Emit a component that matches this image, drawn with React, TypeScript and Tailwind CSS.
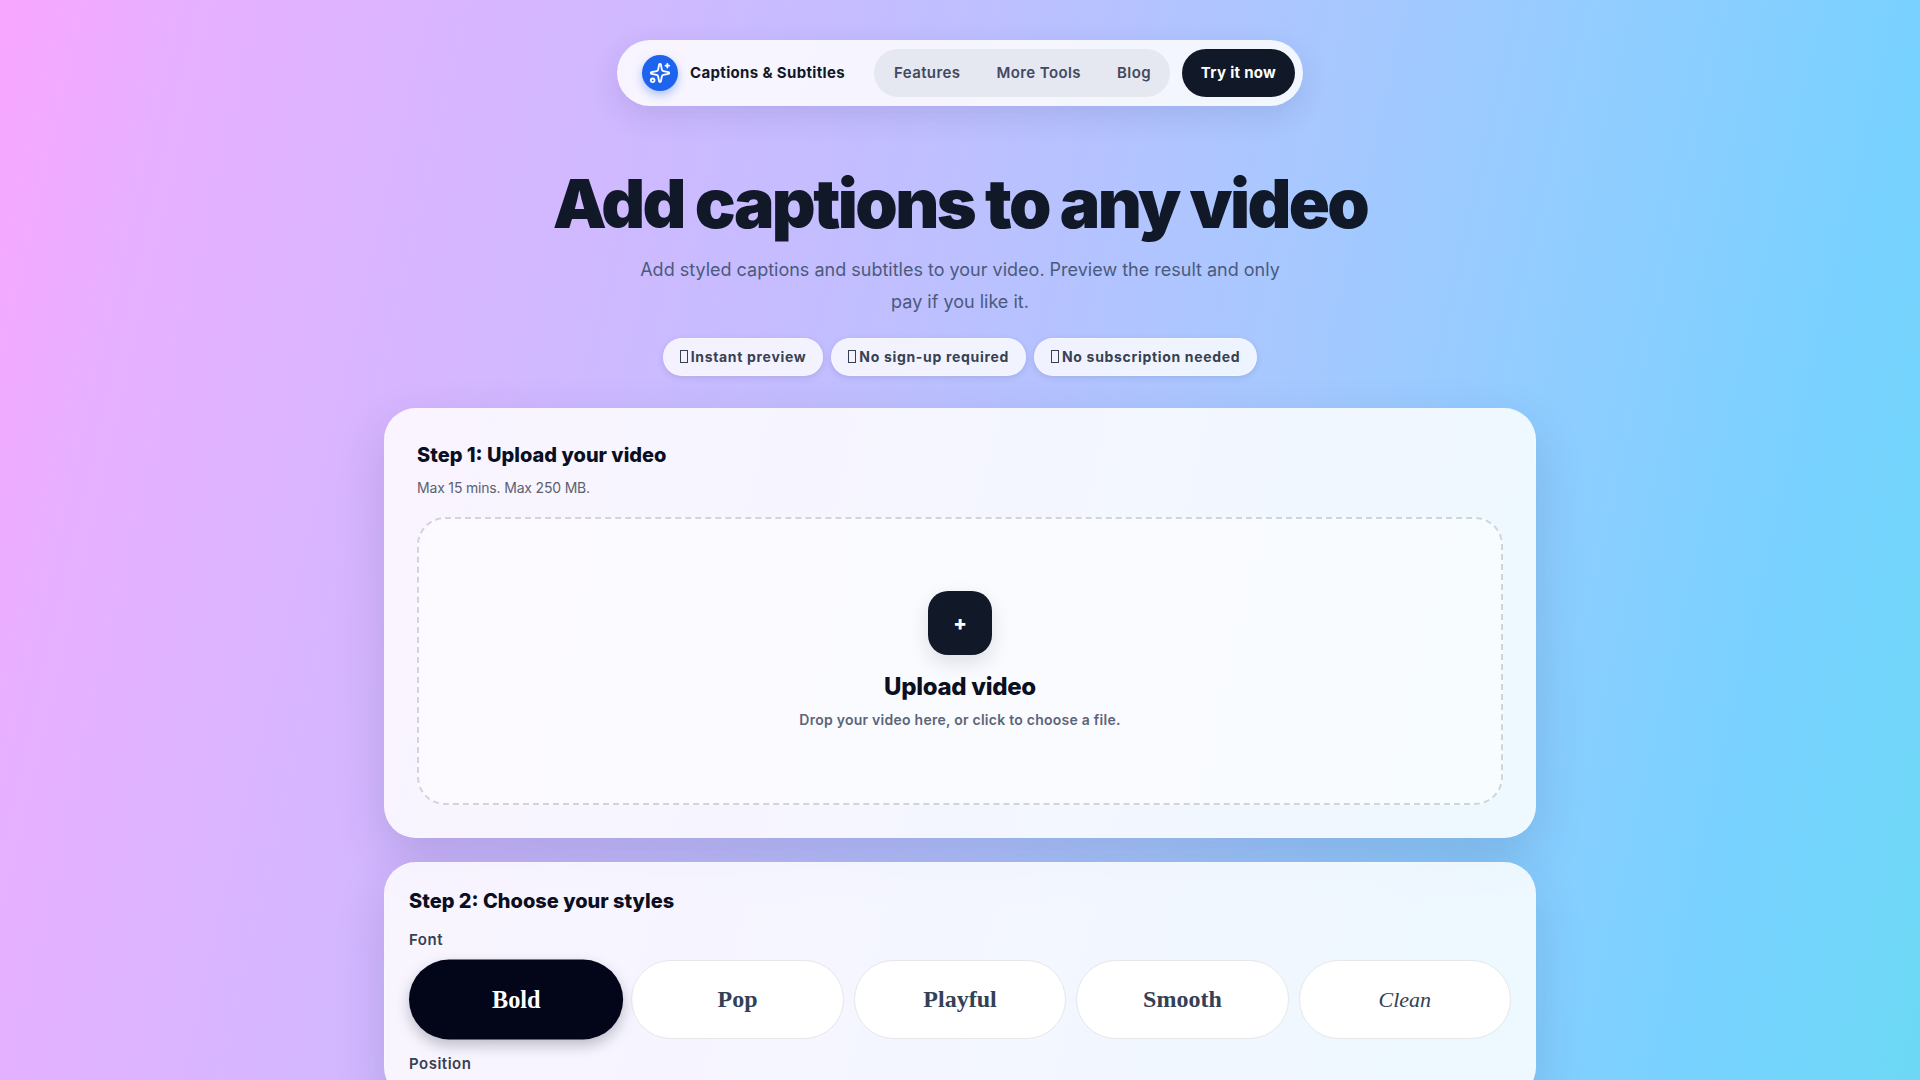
import { Sparkles } from 'lucide-react'

const FONT_OPTIONS = [
  { label: 'Bold', cls: "font-['Liberation_Serif',serif] font-bold text-2xl" },
  { label: 'Pop', cls: "font-['Liberation_Serif',serif] font-bold text-2xl" },
  { label: 'Playful', cls: "font-['Liberation_Serif',serif] font-bold text-2xl" },
  { label: 'Smooth', cls: "font-['Liberation_Serif',serif] font-bold text-2xl" },
  { label: 'Clean', cls: "font-['Liberation_Serif',serif] italic text-[22px]" },
]

const PERKS = ['Instant preview', 'No sign-up required', 'No subscription needed']

function Nav() {
  return (
    <nav className="mx-auto flex h-[66px] w-[686px] items-center rounded-full bg-white/85 pl-[25px] pr-2 shadow-[0_10px_30px_rgba(31,41,90,0.12)]">
      <div className="flex h-9 w-9 items-center justify-center rounded-full bg-[#1d63ed] text-white shadow-[0_4px_10px_rgba(29,99,237,0.35)]">
        <Sparkles size={22} strokeWidth={2} />
      </div>
      <span className="ml-3 w-[156px] text-[15px] font-bold tracking-[0.35px] text-[#111827]">Captions &amp; Subtitles</span>
      <div className="ml-7 flex h-12 w-[296px] items-center justify-between rounded-full bg-[#e5e7f1] pl-5 pr-[19px] text-[15px] font-semibold tracking-[0.4px] text-[#414960]">
        <a>Features</a>
        <a>More Tools</a>
        <a>Blog</a>
      </div>
      <button className="ml-3 h-12 w-[113px] rounded-full bg-[#111827] text-[15px] font-bold tracking-[0.3px] text-white">Try it now</button>
    </nav>
  )
}

function Hero() {
  return (
    <header className="flex flex-col items-center">
      <h1 className="mt-[53px] text-[68px] font-black leading-[88px] tracking-[-2.6px] text-[#111827]">Add captions to any video</h1>
      <p className="mt-[7px] w-[660px] text-center text-[18px] leading-[32.4px] text-[#4b5a7c]">
        Add styled captions and subtitles to your video. Preview the result and only pay if you like it.
      </p>
      <div className="mt-[19px] flex gap-2">
        {PERKS.map((p) => (
          <span key={p} className="flex h-[38px] items-center rounded-full border border-white/40 bg-white/80 px-4 text-[14px] font-bold tracking-[0.68px] text-[#374151] shadow-[0_2px_6px_rgba(31,41,90,0.12)]">
            <span className="mr-[3px] h-[13px] w-2 border border-[#374151]" />
            {p}
          </span>
        ))}
      </div>
    </header>
  )
}

function UploadStep() {
  return (
    <section className="h-[430px] rounded-[32px] border border-white/20 bg-white/85 p-8 shadow-[0_20px_50px_rgba(31,41,90,0.16)]">
      <h2 className="text-xl font-extrabold text-[#0b0f1f]">Step 1: Upload your video</h2>
      <p className="mt-[9px] text-sm tracking-[-0.18px] text-[#5b6270]">Max 15 mins. Max 250 MB.</p>
      <div className="mt-[19px] flex h-[288px] flex-col items-center justify-center rounded-[28px] border-2 border-dashed border-[#d1d5db] bg-white/50">
        <div className="flex h-16 w-16 items-center justify-center rounded-[20px] bg-[#111827] text-xl font-extrabold text-white shadow-[0_8px_20px_rgba(17,24,39,0.12)]">+</div>
        <h3 className="mt-4 text-2xl font-extrabold tracking-[-0.3px] text-[#0b0f1f]">Upload video</h3>
        <p className="mt-[7px] text-sm font-semibold tracking-[0.25px] text-[#5b6478]">Drop your video here, or click to choose a file.</p>
      </div>
    </section>
  )
}

function StylesStep() {
  return (
    <section className="mt-6 rounded-[32px] border border-white/20 bg-white/85 p-6 shadow-[0_20px_50px_rgba(31,41,90,0.16)]">
      <h2 className="text-xl font-extrabold text-[#0b0f1f]">Step 2: Choose your styles</h2>
      <label className="mt-[15px] block text-[15px] font-semibold leading-5 tracking-[0.5px] text-[#374151]">Font</label>
      <div className="mt-[10px] grid grid-cols-5 gap-2.5">
        {FONT_OPTIONS.map((f, i) => (
          <button
            key={f.label}
            className={
              i === 0
                ? `h-[79px] origin-left scale-[1.01] rounded-full bg-[#030518] text-white shadow-[0_6px_14px_rgba(17,24,39,0.25)] ${f.cls}`
                : `h-[79px] rounded-full border border-[#e5e7eb] bg-white text-[#334155] ${f.cls}`
            }
          >
            {f.label}
          </button>
        ))}
      </div>
      <label className="mt-[15px] block text-[15px] font-semibold leading-5 tracking-[0.5px] text-[#374151]">Position</label>
    </section>
  )
}

export default function App() {
  return (
    <div className="h-[1080px] overflow-hidden bg-[linear-gradient(103deg,#f8a6ff_0%,#e6b0ff_9%,#bfbfff_45%,#a8c8ff_62%,#78d2ff_89%,#6cd8f5_100%)] pt-10 font-['Inter',sans-serif]">
      <Nav />
      <Hero />
      <main className="mx-auto mt-8 w-[1152px]">
        <UploadStep />
        <StylesStep />
      </main>
    </div>
  )
}
